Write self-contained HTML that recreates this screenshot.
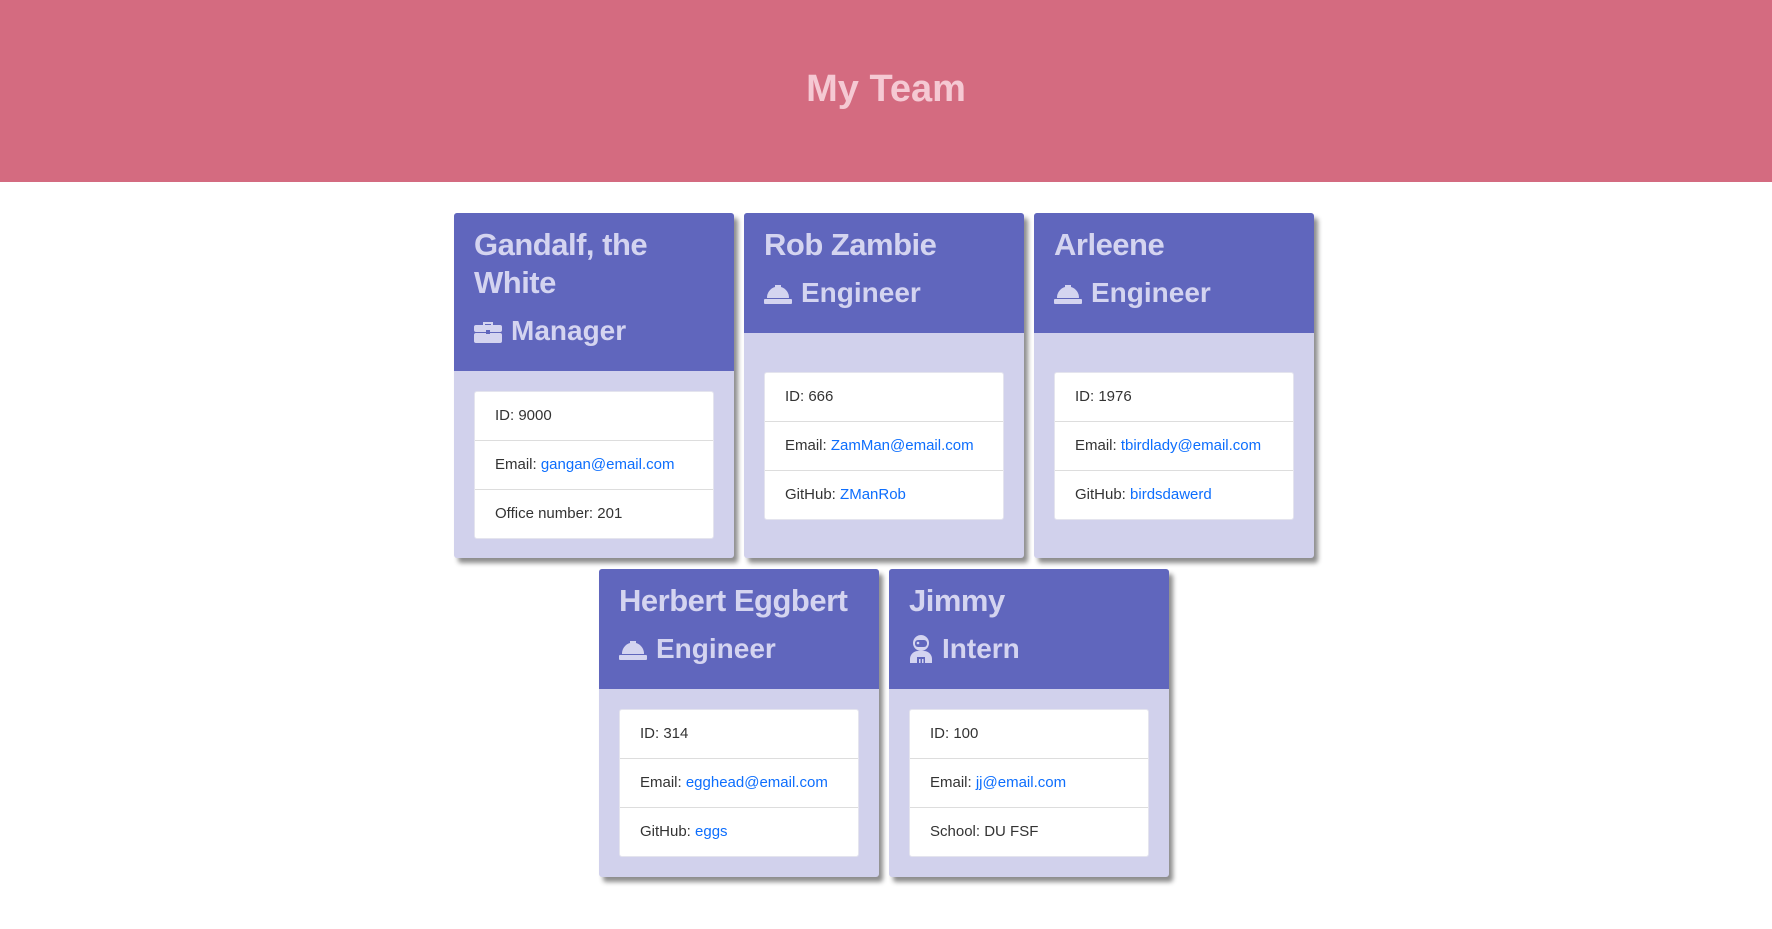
<!DOCTYPE html>
<html><head><meta charset="utf-8"><style>
body{margin:0;width:1772px;height:929px;background:#fff;font-family:"Liberation Sans",sans-serif;position:relative;overflow:hidden}
.top{position:absolute;left:0;top:0;width:1772px;height:182px;background:#d46b80}
.top h1{margin:0;position:absolute;width:100%;top:67px;text-align:center;color:#f5c9d3;font-size:38px;font-weight:bold;line-height:44px}
.card{position:absolute;width:280px;background:#d1d1ec;box-shadow:4px 5px 5px rgba(0,0,0,.45);border-radius:3px;display:flex;flex-direction:column}
.hd{background:#6066bd;padding:13px 20px 21px;color:#d4d4f0;border-radius:3px 3px 0 0}
.nm{font-size:31px;line-height:38px;font-weight:bold;letter-spacing:-.5px}
.rl{font-size:28px;line-height:38px;font-weight:bold;margin-top:10px;display:flex;align-items:center}
.rl svg{margin-right:9px}
.bd{flex:1;display:flex;align-items:center}
.ul{margin:0 20px;width:238px;background:#fff;border-radius:3px;border:1px solid #e4e4ee}
.li{height:48px;line-height:48px;padding-left:20px;font-size:15px;color:#333;border-top:1px solid #ddd}
.li:first-child{border-top:none}
a{color:#0d6efd;text-decoration:none}
</style></head><body>
<div class="top"><h1>My Team</h1></div>

<svg width="0" height="0" style="position:absolute"><defs>
<symbol id="bc" viewBox="0 0 28 24"><path d="M9 3h10v3h-2V5h-6v1H9z" fill="#d4d4f0"/><rect x="0" y="6" width="28" height="7" rx="2" fill="#d4d4f0"/><rect x="0" y="14" width="28" height="10" rx="2" fill="#d4d4f0"/><rect x="12" y="11" width="4" height="4" fill="#6066bd"/></symbol>
<symbol id="hh" viewBox="0 0 28 22"><path d="M3 16a11 11 0 0 1 8-11V3h6v2a11 11 0 0 1 8 11z" fill="#d4d4f0"/><rect x="0" y="17" width="28" height="5" rx="1" fill="#d4d4f0"/></symbol>
<symbol id="as" viewBox="0 0 24 28"><circle cx="12" cy="8" r="8" fill="#d4d4f0"/><rect x="6" y="5" width="12" height="7" rx="3" fill="#6066bd"/><circle cx="9" cy="8" r="1.3" fill="#d4d4f0"/><path d="M1 28v-4a8 8 0 0 1 8-8h6a8 8 0 0 1 8 8v4z" fill="#d4d4f0"/><rect x="8" y="22" width="8" height="6" fill="#6066bd"/><rect x="10" y="24" width="1.5" height="4" fill="#d4d4f0"/><rect x="13" y="24" width="1.5" height="4" fill="#d4d4f0"/></symbol>
</defs></svg>

<div class="card" style="left:454px;top:213px;height:345px">
<div class="hd"><div class="nm">Gandalf, the<br>White</div><div class="rl"><svg width="28" height="24"><use href="#bc"/></svg>Manager</div></div>
<div class="bd"><div class="ul"><div class="li">ID: 9000</div><div class="li">Email: <a>gangan@email.com</a></div><div class="li">Office number: 201</div></div></div>
</div>

<div class="card" style="left:744px;top:213px;height:345px">
<div class="hd"><div class="nm">Rob Zambie</div><div class="rl"><svg width="28" height="22"><use href="#hh"/></svg>Engineer</div></div>
<div class="bd"><div class="ul"><div class="li">ID: 666</div><div class="li">Email: <a>ZamMan@email.com</a></div><div class="li">GitHub: <a>ZManRob</a></div></div></div>
</div>

<div class="card" style="left:1034px;top:213px;height:345px">
<div class="hd"><div class="nm">Arleene</div><div class="rl"><svg width="28" height="22"><use href="#hh"/></svg>Engineer</div></div>
<div class="bd"><div class="ul"><div class="li">ID: 1976</div><div class="li">Email: <a>tbirdlady@email.com</a></div><div class="li">GitHub: <a>birdsdawerd</a></div></div></div>
</div>

<div class="card" style="left:599px;top:569px;height:308px">
<div class="hd"><div class="nm">Herbert Eggbert</div><div class="rl"><svg width="28" height="22"><use href="#hh"/></svg>Engineer</div></div>
<div class="bd"><div class="ul"><div class="li">ID: 314</div><div class="li">Email: <a>egghead@email.com</a></div><div class="li">GitHub: <a>eggs</a></div></div></div>
</div>

<div class="card" style="left:889px;top:569px;height:308px">
<div class="hd"><div class="nm">Jimmy</div><div class="rl"><svg width="24" height="28"><use href="#as"/></svg>Intern</div></div>
<div class="bd"><div class="ul"><div class="li">ID: 100</div><div class="li">Email: <a>jj@email.com</a></div><div class="li">School: DU FSF</div></div></div>
</div>
</body></html>
